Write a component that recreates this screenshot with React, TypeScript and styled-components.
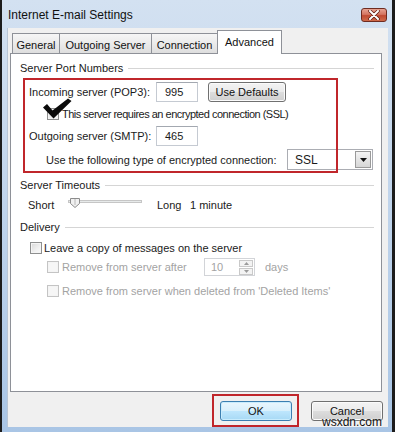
import React from "react";
import styled, { createGlobalStyle, css } from "styled-components";

const GlobalStyle = createGlobalStyle`
  html, body {
    margin: 0;
    padding: 0;
    background: #ffffff;
  }
  body {
    font-family: "Liberation Sans", Arial, sans-serif;
    font-size: 11px;
    color: #1a1a1a;
  }
`;

export default function App() {
	return (
		<>
			<GlobalStyle />
			<Window>
				<TitleBar>
					<Title>Internet E-mail Settings</Title>
					<CloseButton aria-label="Close">
						<svg width="12" height="10" viewBox="0 0 12 10">
							<path d="M2 1 L10 9 M10 1 L2 9" stroke="#5a1a10" strokeWidth="3.4" strokeLinecap="round" />
							<path d="M2 1 L10 9 M10 1 L2 9" stroke="#ffffff" strokeWidth="2" strokeLinecap="round" />
						</svg>
					</CloseButton>
				</TitleBar>

				<Body>
					<TabRow>
						<Tab $width={48}>General</Tab>
						<Tab $width={93}>Outgoing Server</Tab>
						<Tab $width={67}>Connection</Tab>
						<Tab $width={65} $active>
							Advanced
						</Tab>
					</TabRow>

					<Panel>
						<GroupHeader>
							<span>Server Port Numbers</span>
							<Rule />
						</GroupHeader>

						<RedBox>
							<FieldRow>
								<FieldLabel $width={127}>Incoming server (POP3):</FieldLabel>
								<TextBox $width={42}>995</TextBox>
								<PushButton $width={78}>Use Defaults</PushButton>
							</FieldRow>
							<CheckRow $indent={18}>
								<Tick width="30" height="21" viewBox="0 0 30 21">
									<path d="M1 9.5 L5 6 L10.5 12.5 L26 0.5 L29.5 3 L11.5 20.5 Z" fill="#0b0b0b" />
								</Tick>
								<CheckBox />
								<TightText>This server requires an encrypted connection (SSL)</TightText>
							</CheckRow>
							<FieldRow>
								<FieldLabel $width={127}>Outgoing server (SMTP):</FieldLabel>
								<TextBox $width={42}>465</TextBox>
							</FieldRow>
							<SelectRow>
								<FieldLabel $width={241}>Use the following type of encrypted connection:</FieldLabel>
								<Select>
									<span>SSL</span>
									<SelectArrow>
										<svg width="7" height="4" viewBox="0 0 7 4">
											<path d="M0 0 H7 L3.5 4 Z" fill="#111" />
										</svg>
									</SelectArrow>
								</Select>
							</SelectRow>
						</RedBox>

						<GroupHeader $gap={5}>
							<span>Server Timeouts</span>
							<Rule />
						</GroupHeader>

						<SliderRow>
							<SliderLabel $width={40}>Short</SliderLabel>
							<svg width="74" height="16" viewBox="0 0 74 16">
								<rect x="0.5" y="3.5" width="73" height="2" fill="#e7eaea" stroke="#c6c6c6" />
								<path d="M2.5 1.5 H11.5 V6.5 L7 10.5 L2.5 6.5 Z" fill="#f1f1f1" stroke="#8c8c8c" />
								<path d="M7 2 V8" stroke="#b8b8b8" />
							</svg>
							<SliderLabel $width={33} $offset={15}>
								Long
							</SliderLabel>
							<span>1 minute</span>
						</SliderRow>

						<GroupHeader $gap={7}>
							<span>Delivery</span>
							<Rule />
						</GroupHeader>

						<DeliveryRow>
							<CheckBox />
							<span>Leave a copy of messages on the server</span>
						</DeliveryRow>
						<SubRow $gap={3} $height={18}>
							<CheckBox $disabled />
							<FieldLabel $width={139}>Remove from server after</FieldLabel>
							<Spinner>
								<span>10</span>
								<SpinButtons>
									<SpinButton>
										<svg width="5" height="3" viewBox="0 0 5 3">
											<path d="M0 3 L2.5 0 L5 3 Z" fill="#9a9a9a" />
										</svg>
									</SpinButton>
									<SpinButton>
										<svg width="5" height="3" viewBox="0 0 5 3">
											<path d="M0 0 H5 L2.5 3 Z" fill="#9a9a9a" />
										</svg>
									</SpinButton>
								</SpinButtons>
							</Spinner>
							<Days>days</Days>
						</SubRow>
						<SubRow $gap={8} $height={14}>
							<CheckBox $disabled />
							<span>Remove from server when deleted from 'Deleted Items'</span>
						</SubRow>
					</Panel>

					<ButtonRow>
						<Highlight>
							<PushButton $width={72} $primary>
								OK
							</PushButton>
						</Highlight>
						<PushButton $width={72}>Cancel</PushButton>
					</ButtonRow>

					<Watermark>wsxdn.com</Watermark>
				</Body>
			</Window>
		</>
	);
}

const Window = styled.div`
	width: 395px;
	height: 432px;
	box-sizing: border-box;
	border-left: 2px solid #1c1c1c;
	border-right: 3px solid #1c1c1c;
	background: linear-gradient(180deg, #d3e1f1 0%, #c3d6ec 40%, #a9c5e5 100%);
	display: flex;
	flex-direction: column;
`;

const TitleBar = styled.div`
	height: 28px;
	flex-shrink: 0;
	display: flex;
	align-items: center;
	justify-content: space-between;
	padding: 0 5px 0 6px;
	box-sizing: border-box;
`;

const Title = styled.div`
	font-size: 12px;
	color: #101010;
	margin-top: 1px;
`;

const CloseButton = styled.div`
	width: 26px;
	height: 14px;
	margin-top: 1px;
	box-sizing: border-box;
	border: 1px solid #6e2b20;
	border-radius: 3px;
	background: linear-gradient(180deg, #e8a291 0%, #d47561 45%, #c04a32 55%, #cf6a4a 100%);
	display: flex;
	align-items: center;
	justify-content: center;
`;

const Body = styled.div`
	position: relative;
	height: 399px;
	margin: 0 4px 0 5px;
	padding: 2px 6px 0 3px;
	box-sizing: border-box;
	background: #f0f0f0;
	box-shadow: inset 1px 0 0 #b9c6d6;
	display: flex;
	flex-direction: column;
`;

const TabRow = styled.div`
	height: 23px;
	display: flex;
	align-items: flex-end;
	margin-left: 2px;
	flex-shrink: 0;
`;

const Tab = styled.div<{ $width: number; $active?: boolean }>`
	width: ${({ $width }) => $width}px;
	height: 20px;
	box-sizing: border-box;
	margin-right: -1px;
	border: 1px solid #8e9198;
	border-bottom: none;
	background: linear-gradient(180deg, #f6f6f6 0%, #ebebeb 50%, #dedede 100%);
	display: flex;
	align-items: center;
	justify-content: center;
	padding-top: 2px;
	color: #111;
	${({ $active }) =>
		$active &&
		css`
			height: 24px;
			margin-bottom: -1px;
			background: #ffffff;
			position: relative;
			z-index: 1;
			padding-top: 0;
			padding-bottom: 2px;
		`}
`;

const Panel = styled.div`
	width: 372px;
	height: 339px;
	flex-shrink: 0;
	box-sizing: border-box;
	border: 1px solid #8e9198;
	background: #ffffff;
	padding-top: 7px;
	display: flex;
	flex-direction: column;
`;

const GroupHeader = styled.div<{ $gap?: number }>`
	height: 14px;
	display: flex;
	align-items: center;
	gap: 5px;
	margin: ${({ $gap = 0 }) => $gap}px 7px 0 9px;
	color: #1a1a1a;
`;

const Rule = styled.div`
	flex: 1;
	height: 1px;
	background: #d5d5d5;
	box-shadow: 0 1px 0 #ffffff;
`;

const RedBox = styled.div`
	position: relative;
	width: 315px;
	height: 95px;
	margin: 3px 0 0 12px;
	padding: 4px 0 0 6px;
	box-sizing: border-box;
	display: flex;
	flex-direction: column;
	gap: 2px;
	&::after {
		content: "";
		position: absolute;
		inset: 0;
		border: 2px solid #c0262b;
		pointer-events: none;
		z-index: 2;
	}
`;

const FieldRow = styled.div`
	height: 20px;
	display: flex;
	align-items: center;
`;

const SelectRow = styled(FieldRow)`
	height: 21px;
	margin-top: 1px;
	padding-left: 17px;
`;

const FieldLabel = styled.span<{ $width: number }>`
	width: ${({ $width }) => $width}px;
	flex-shrink: 0;
	white-space: nowrap;
`;

const TextBox = styled.div<{ $width: number }>`
	width: ${({ $width }) => $width}px;
	height: 20px;
	box-sizing: border-box;
	border: 1px solid #c5cad2;
	border-top-color: #a3a8b0;
	background: #ffffff;
	padding-left: 8px;
	display: flex;
	align-items: center;
	flex-shrink: 0;
`;

const PushButton = styled.div<{ $width: number; $primary?: boolean }>`
	width: ${({ $width }) => $width}px;
	height: 20px;
	margin-left: 10px;
	box-sizing: border-box;
	border: 1px solid #707070;
	border-radius: 3px;
	background: linear-gradient(180deg, #f3f3f3 0%, #ebebeb 49%, #dddddd 51%, #cfcfcf 100%);
	box-shadow: inset 0 0 0 1px #fbfbfb;
	display: flex;
	align-items: center;
	justify-content: center;
	flex-shrink: 0;
	color: #111;
	${({ $primary }) =>
		$primary &&
		css`
			margin-left: 0;
			border-color: #3c7fb1;
			background: linear-gradient(180deg, #eaf6fd 0%, #d9f0fc 49%, #bee6fd 51%, #a7d9f5 100%);
			box-shadow: inset 0 0 0 1px #c9ecfd;
		`}
`;

const CheckRow = styled.div<{ $indent: number }>`
	position: relative;
	height: 20px;
	display: flex;
	align-items: center;
	gap: 3px;
	padding-left: ${({ $indent }) => $indent}px;
`;

const TightText = styled.span`
	letter-spacing: -0.5px;
	white-space: nowrap;
`;

const Tick = styled.svg`
	position: absolute;
	left: 13px;
	top: -6px;
	z-index: 3;
`;

const CheckBox = styled.div<{ $disabled?: boolean }>`
	width: 12px;
	height: 12px;
	flex-shrink: 0;
	box-sizing: border-box;
	border: 1px solid ${({ $disabled }) => ($disabled ? "#c4c4c4" : "#8e8f8f")};
	background: ${({ $disabled }) =>
		$disabled ? "#f6f6f6" : "linear-gradient(135deg, #d8d8d8 0%, #f0f0f0 60%, #fafafa 100%)"};
	box-shadow: inset 0 0 0 1px #f4f4f4;
`;

const Select = styled.div`
	width: 86px;
	height: 21px;
	flex-shrink: 0;
	box-sizing: border-box;
	border: 1px solid #abadb3;
	background: #ffffff;
	display: flex;
	align-items: center;
	justify-content: space-between;
	padding: 0 0 0 7px;
	font-size: 12px;
`;

const SelectArrow = styled.div`
	width: 16px;
	height: 17px;
	box-sizing: border-box;
	border: 1px solid #9a9a9a;
	background: linear-gradient(180deg, #f4f4f4, #d6d6d6);
	display: flex;
	align-items: center;
	justify-content: center;
	margin-right: 1px;
`;

const SliderRow = styled.div`
	height: 16px;
	margin: 5px 0 0 17px;
	display: flex;
	align-items: center;
`;

const SliderLabel = styled.span<{ $width: number; $offset?: number }>`
	width: ${({ $width }) => $width}px;
	margin-left: ${({ $offset = 0 }) => $offset}px;
	flex-shrink: 0;
`;

const DeliveryRow = styled.div`
	height: 14px;
	margin: 7px 0 0 19px;
	display: flex;
	align-items: center;
	gap: 2px;
`;

const SubRow = styled.div<{ $gap: number; $height: number }>`
	height: ${({ $height }) => $height}px;
	margin: ${({ $gap }) => $gap}px 0 0 36px;
	display: flex;
	align-items: center;
	gap: 3px;
	color: #a3a3a3;
`;

const Spinner = styled.div`
	width: 51px;
	height: 18px;
	box-sizing: border-box;
	border: 1px solid #d2d4d8;
	background: #ffffff;
	display: flex;
	align-items: center;
	justify-content: space-between;
	padding-left: 6px;
	flex-shrink: 0;
`;

const SpinButtons = styled.div`
	display: flex;
	flex-direction: column;
	gap: 1px;
	margin-right: 1px;
`;

const SpinButton = styled.div`
	width: 14px;
	height: 7px;
	box-sizing: border-box;
	border: 1px solid #c9c9c9;
	background: #f3f3f3;
	display: flex;
	align-items: center;
	justify-content: center;
`;

const Days = styled.span`
	margin-left: 7px;
`;

const ButtonRow = styled.div`
	height: 33px;
	margin-top: 2px;
	flex-shrink: 0;
	display: flex;
	justify-content: flex-end;
	align-items: center;
	gap: 2px;
	margin-right: -1px;
`;

const Highlight = styled.div`
	border: 2px solid #c0262b;
	padding: 5px 5px 4px 6px;
	display: flex;
`;

const Watermark = styled.div`
	position: absolute;
	right: 6px;
	bottom: -2px;
	font-size: 12px;
	color: #111;
	text-shadow: 0 0 2px #ffffff;
`;
